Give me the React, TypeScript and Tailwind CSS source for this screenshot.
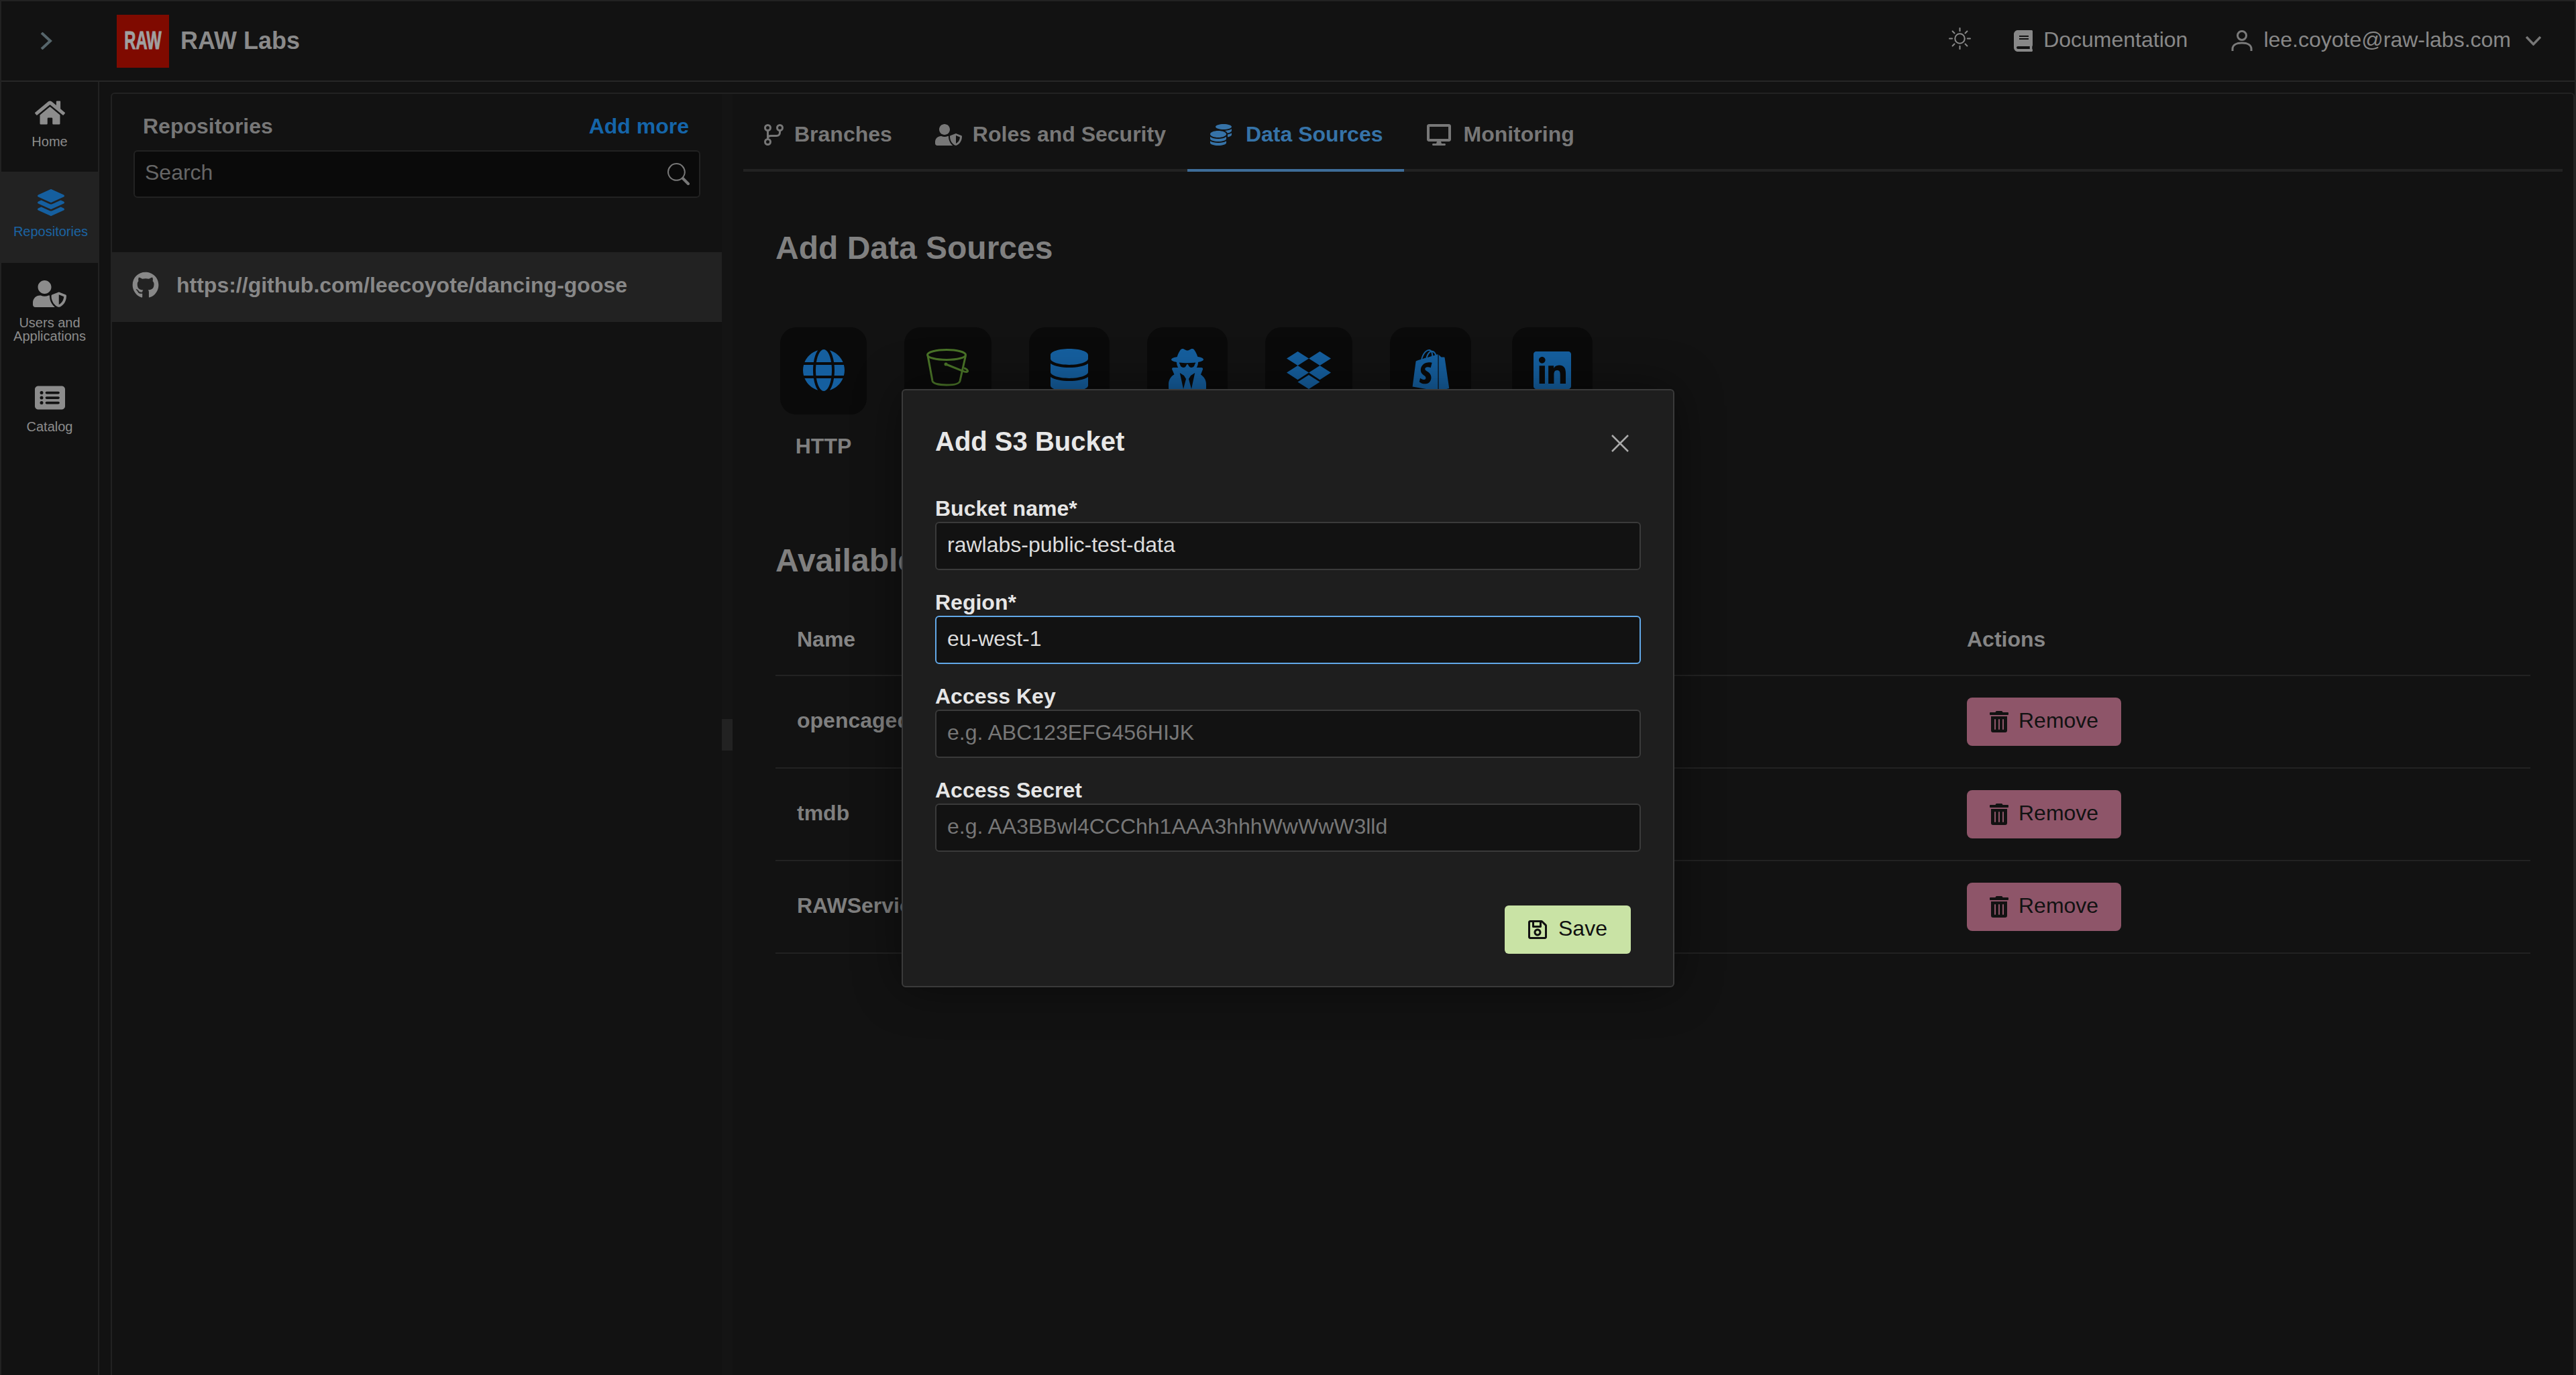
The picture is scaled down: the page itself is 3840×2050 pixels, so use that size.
import type { ReactNode } from "react";
import {
  FaBook,
  FaCoins,
  FaDatabase,
  FaDesktop,
  FaDropbox,
  FaGithub,
  FaGlobe,
  FaHome,
  FaLayerGroup,
  FaLinkedin,
  FaRegSave,
  FaShopify,
  FaTrashAlt,
  FaUserSecret,
  FaUserShield,
} from "react-icons/fa";
import { FaRectangleList } from "react-icons/fa6";
import { BsSearch, BsSun } from "react-icons/bs";

const TILE_ICON = "h-[64px] text-[#155f9f]";

function BranchIcon() {
  return (
    <svg width="29" height="32" viewBox="0 0 29 32" fill="none" stroke="#777777" strokeWidth="3">
      <circle cx="5.5" cy="5.5" r="4" />
      <circle cx="23.5" cy="5.5" r="4" />
      <circle cx="5.5" cy="26.5" r="4" />
      <path d="M5.5 9.5v13M23.5 9.5v3c0 3-2 5-5 5H10c-3 0-4.5 1.5-4.5 4" />
    </svg>
  );
}

function BucketIcon() {
  return (
    <svg width="64" height="56" viewBox="0 0 64 56" fill="none" stroke="#4a7428" strokeWidth="3">
      <ellipse cx="30" cy="9" rx="28.5" ry="7.5" />
      <path d="M2 10l7 38c1 4 10 6 21 6s19-2 20-6l8.500-38" />
      <path d="M29 23l25 10c6 3 9 1 7-1-1-2-4-3-5-3" />
      <circle cx="29" cy="23" r="2.500" fill="#4a7428" stroke="none" />
    </svg>
  );
}

function UserIcon() {
  return (
    <svg className="mr-[16px]" width="32" height="32" viewBox="0 0 32 32" fill="none" stroke="#7a7a7a" strokeWidth="3">
      <circle cx="16" cy="8" r="6.500" />
      <path d="M2 31v-3c0-6 6-9 14-9s14 3 14 9v3" />
    </svg>
  );
}

function SideItem({
  icon,
  label,
  active,
  h,
}: {
  icon: ReactNode;
  label: ReactNode;
  active?: boolean;
  h: string;
}) {
  return (
    <div
      className={`flex flex-col items-center pt-[26px] text-center text-[20px] leading-[20px] ${h} ${
        active ? "-mx-[2px] bg-[#222222] pl-[3px] text-[#1b64a4]" : "text-[#8c8c8c]"
      }`}
    >
      <div className="mb-[13px] flex h-[40px] items-center justify-center">{icon}</div>
      <div>{label}</div>
    </div>
  );
}

function Tab({
  icon,
  label,
  active,
  spacing,
}: {
  icon: ReactNode;
  label: string;
  active?: boolean;
  spacing: string;
}) {
  return (
    <div
      className={`-mb-[4px] flex h-[116px] items-center border-b-4 pr-[32px] pt-[10px] text-[32px] font-bold ${spacing} ${
        active ? "border-[#3e6d99] text-[#3673a8]" : "border-transparent text-[#777777]"
      }`}
    >
      {icon}
      <span className="-mt-[2px]">{label}</span>
    </div>
  );
}

function SourceTile({ icon, w, label }: { icon: ReactNode; w: string; label?: string }) {
  return (
    <div className={`flex flex-col items-center ${w}`}>
      <div className="flex h-[130px] w-full justify-center rounded-[24px] bg-[#0a0a0a] pt-[32px]">{icon}</div>
      {label ? <div className="mt-[27px] text-[32px] font-bold leading-[40px] text-[#7f7f7f]">{label}</div> : null}
    </div>
  );
}

function SourceRow({ name }: { name: string }) {
  return (
    <div className="grid h-[138px] grid-cols-[1776px_1fr] items-center border-b-2 border-[#222222]">
      <div className="-mt-[4px] pl-[32px] text-[32px] font-bold text-[#7f7f7f]">{name}</div>
      <button className="flex h-[72px] w-[230px] items-center gap-[15px] rounded-[8px] bg-[#8e5569] pl-[34px] text-[32px] text-[#121212]">
        <FaTrashAlt className="h-[32px] w-[28px]" />
        <span className="-mt-[4px]">Remove</span>
      </button>
    </div>
  );
}

function Field({
  label,
  value,
  placeholder,
  focused,
}: {
  label: string;
  value?: string;
  placeholder?: string;
  focused?: boolean;
}) {
  return (
    <div className="mb-[28px]">
      <label className="block text-[32px] font-bold leading-[40px] text-[#e6e6e6]">{label}</label>
      <input
        readOnly
        value={value}
        placeholder={placeholder}
        className={`block h-[72px] w-full rounded-[6px] border-2 bg-[#121212] px-[16px] pb-[4px] text-[32px] text-[#dddddd] outline-none placeholder:text-[#777777] ${
          focused ? "border-[#62a8e8]" : "border-[#3a3a3a]"
        }`}
      />
    </div>
  );
}

export default function App() {
  return (
    <div className="relative flex h-[2050px] w-[3840px] flex-col overflow-hidden border-x-2 border-t-2 border-[#222222] bg-[#121212] font-['Liberation_Sans',sans-serif]">
      <header className="flex h-[120px] shrink-0 items-center border-b-2 border-[#262626] pr-[50px]">
        <svg className="ml-[58px] mr-[96px]" width="18" height="26" viewBox="0 0 18 26" fill="none" stroke="#56656b" strokeWidth="4">
          <path d="M2 1l13 12L2 25" />
        </svg>
        <div className="flex h-[79px] w-[78px] items-center justify-center overflow-hidden bg-[#7f0a00]">
          <span className="inline-block scale-x-[0.66] text-[36px] font-bold text-[#a0a0a0] [-webkit-text-stroke:1px_#a0a0a0]">
            RAW
          </span>
        </div>
        <div className="ml-[17px] text-[36px] font-bold text-[#8a8a8a]">RAW Labs</div>
        <div className="ml-auto flex items-center text-[32px] text-[#888888]">
          <BsSun size={33} className="-mt-[8px] mr-[64px]" />
          <FaBook className="mr-[16px] h-[32px] w-[28px]" />
          <span className="-mt-[4px] mr-[65px]">Documentation</span>
          <UserIcon />
          <span className="-mt-[4px] mr-[22px]">lee.coyote@raw-labs.com</span>
          <svg width="23" height="14" viewBox="0 0 23 14" fill="none" stroke="#777777" strokeWidth="3.5">
            <path d="M1 1l10.500 11L22 1" />
          </svg>
        </div>
      </header>

      <div className="flex min-h-0 flex-1">
        <nav className="w-[146px] shrink-0 border-r-2 border-[#222222]">
          <SideItem h="h-[134px]" icon={<FaHome className="h-[40px] w-[45px]" />} label="Home" />
          <SideItem h="h-[136px]" active icon={<FaLayerGroup className="h-[40px] w-[40px] text-[#155f9f]" />} label="Repositories" />
          <SideItem
            h="h-[155px]"
            icon={<FaUserShield className="h-[40px] w-[50px]" />}
            label={
              <>
                Users and
                <br />
                Applications
              </>
            }
          />
          <SideItem h="h-[136px]" icon={<FaRectangleList className="h-[40px] w-[45px]" />} label="Catalog" />
        </nav>

        <main className="ml-[17px] mt-[16px] flex flex-1 rounded-t-[6px] border-x-2 border-t-2 border-[#222222]">
          <section className="w-[909px] shrink-0">
            <div className="flex items-center justify-between pl-[46px] pr-[49px] pt-[28px] text-[32px] font-bold leading-[40px]">
              <span className="text-[#777777]">Repositories</span>
              <span className="text-[#1565a9]">Add more</span>
            </div>
            <div className="ml-[32px] mt-[16px] flex h-[71px] w-[845px] items-center justify-between rounded-[6px] border-2 border-[#222222] bg-[#0a0a0a] pl-[15px] pr-[14px] text-[32px] text-[#666666]">
              <span className="-mt-[6px]">Search</span>
              <BsSearch size={33} className="text-[#777777]" />
            </div>
            <div className="mt-[81px] flex h-[104px] items-center gap-[26px] bg-[#222222] pl-[30px] text-[32px] font-bold text-[#888888]">
              <FaGithub size={40} className="-mt-[6px]" />
              <span className="-mt-[6px]">https://github.com/leecoyote/dancing-goose</span>
            </div>
          </section>

          <div className="flex w-[16px] shrink-0 items-center bg-[#141414]">
            <div className="h-[47px] w-full bg-[#222222]" />
          </div>

          <section className="min-w-0 flex-1 px-[16px]">
            <div className="flex h-[116px] border-b-4 border-[#222222]">
              <Tab spacing="gap-[16px] pl-[31px]" icon={<BranchIcon />} label="Branches" />
              <Tab spacing="gap-[16px] pl-[32px]" icon={<FaUserShield className="h-[32px] w-[40px]" />} label="Roles and Security" />
              <Tab spacing="gap-[21px] pl-[34px]" active icon={<FaCoins className="h-[32px] w-[32px]" />} label="Data Sources" />
              <Tab spacing="gap-[18px] pl-[34px]" icon={<FaDesktop className="h-[32px] w-[36px]" />} label="Monitoring" />
            </div>

            <div className="px-[48px]">
              <h2 className="mt-[86px] text-[48px] font-bold leading-[56px] text-[#808080]">Add Data Sources</h2>
              <div className="mt-[90px] flex gap-[56px] pl-[7px]">
                <SourceTile w="w-[129px]" label="HTTP" icon={<FaGlobe className={`${TILE_ICON} w-[64px]`} />} />
                <SourceTile w="w-[130px]" icon={<BucketIcon />} />
                <SourceTile w="w-[120px]" icon={<FaDatabase className={`${TILE_ICON} w-[56px]`} />} />
                <SourceTile w="w-[120px]" icon={<FaUserSecret className={`${TILE_ICON} w-[56px]`} />} />
                <SourceTile w="w-[130px]" icon={<FaDropbox className={`${TILE_ICON} w-[66px]`} />} />
                <SourceTile w="w-[121px]" icon={<FaShopify className={`${TILE_ICON} w-[56px]`} />} />
                <div className="ml-[5px]">
                  <SourceTile w="w-[120px]" icon={<FaLinkedin className={`${TILE_ICON} w-[56px]`} />} />
                </div>
              </div>

              <h2 className="mt-[123px] text-[48px] font-bold leading-[56px] text-[#808080]">Available Data Sources</h2>
              <div className="mt-[36px] grid h-[108px] grid-cols-[1776px_1fr] items-center border-b-2 border-[#222222] text-[32px] font-bold text-[#858585]">
                <div className="pl-[32px]">Name</div>
                <div>Actions</div>
              </div>
              <SourceRow name="opencagedata" />
              <SourceRow name="tmdb" />
              <SourceRow name="RAWService" />
            </div>
          </section>
        </main>
      </div>

      <div className="absolute inset-0 flex items-center justify-center">
        <div className="w-[1152px] rounded-[6px] border-2 border-[#3a3a3a] bg-[#1e1e1e] px-[48px] pb-[48px] pt-[52px] shadow-[0_0_70px_rgba(0,0,0,0.45)]">
          <div className="flex h-[48px] items-center justify-between">
            <h3 className="text-[40px] font-bold leading-[48px] text-[#e8e8e8]">Add S3 Bucket</h3>
            <svg className="mr-[18px] mt-[6px]" width="26" height="26" viewBox="0 0 26 26" stroke="#aaaaaa" strokeWidth="2.5">
              <path d="M1 1l24 24M25 1L1 25" />
            </svg>
          </div>
          <div className="mt-[56px]">
            <Field label="Bucket name*" value="rawlabs-public-test-data" />
            <Field label="Region*" value="eu-west-1" focused />
            <Field label="Access Key" placeholder="e.g. ABC123EFG456HIJK" />
            <Field label="Access Secret" placeholder="e.g. AA3BBwl4CCChh1AAA3hhhWwWwW3lld" />
          </div>
          <div className="mt-[80px] flex justify-end pr-[15px]">
            <button className="flex h-[72px] w-[188px] items-center gap-[17px] rounded-[6px] bg-[#c9e3a5] pl-[35px] text-[32px] text-[#111111]">
              <FaRegSave className="h-[32px] w-[28px]" />
              <span className="-mt-[4px]">Save</span>
            </button>
          </div>
        </div>
      </div>
    </div>
  );
}
